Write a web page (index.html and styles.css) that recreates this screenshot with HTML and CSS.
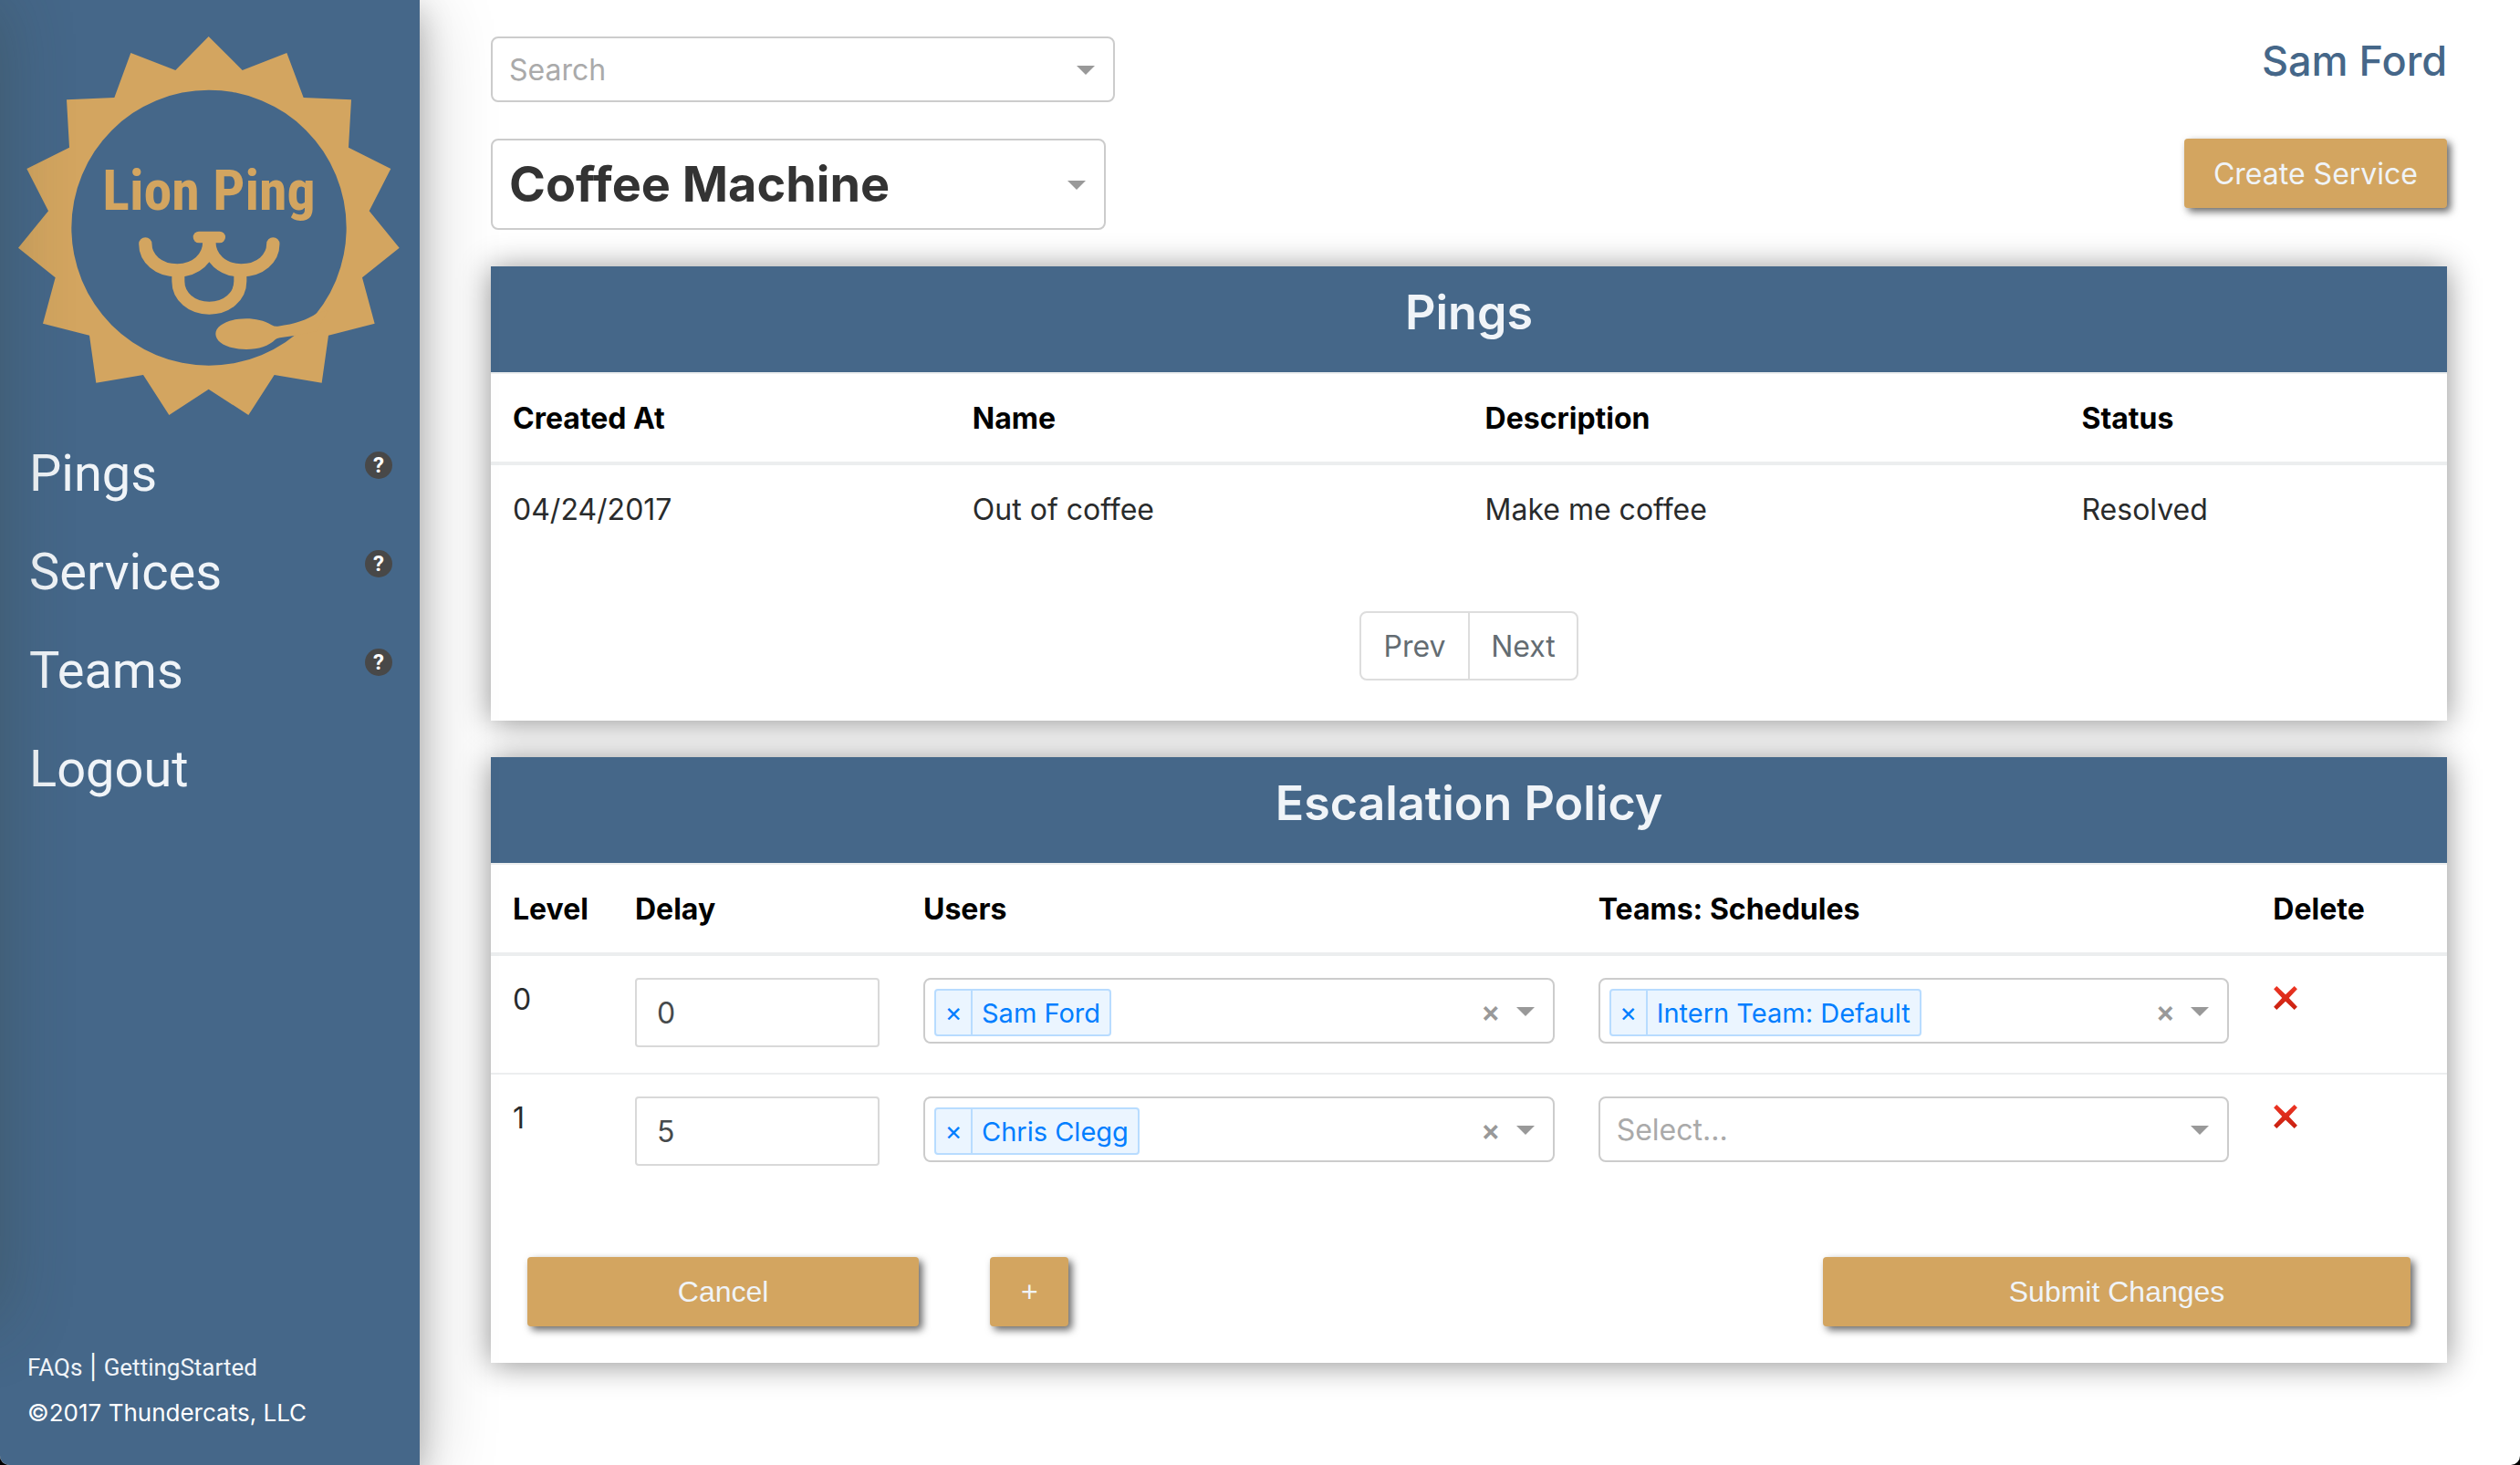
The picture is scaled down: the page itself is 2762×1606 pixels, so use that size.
FILE: index.html
```html
<!DOCTYPE html>
<html lang="en">
<head>
<meta charset="utf-8">
<meta name="viewport" content="width=device-width, initial-scale=1">
<title>Lion Ping</title>
<link rel="stylesheet" href="styles.css">
</head>
<body>
<div class="app">
  <aside class="sidebar">
    <a class="logo" href="#">
      <svg viewBox="20 40 418 416" role="img" aria-label="Lion Ping">
        <g transform="scale(.33333)" fill="#d3a560">
          <path fill-rule="evenodd" d="M686 120L797 231L943 174L998 321L1155 328L1146 485L1285 555L1214 694L1313 815L1191 913L1232 1064L1080 1103L1058 1259L902 1233L817 1365L686 1280L556 1365L471 1233L316 1259L294 1103L141 1064L182 913L60 815L159 694L88 555L228 485L219 328L376 321L430 174L577 231ZM687 296A452 453 0 1 0 687 1202A452 453 0 1 0 687 296Z"/>
          <path d="M1042 1030C1010 1052 970 1066 914 1073Q904 1075 893 1069C868 1054 840 1048 810 1048C752 1048 709 1070 709 1098C709 1127 752 1149 810 1149C850 1149 885 1138 905 1117Q910 1112 920 1111L967 1104L1040 1090L1080 1020Z"/>
          <rect x="635" y="761" width="106" height="38" rx="19"/>
          <g fill="none" stroke="#d3a560" stroke-width="43">
            <path stroke-linecap="round" d="M478 802C478 850 520 889 583 889C645 889 688 848 688 796C688 848 731 889 793 889C856 889 898 850 898 802"/>
            <path stroke-width="42" d="M586 900V925C586 975 630 1013 688 1013C746 1013 790 975 790 925V900"/>
          </g>
        </g>
        <text class="logo-text" x="229" y="230" text-anchor="middle">Lion Ping</text>
      </svg>
    </a>
    <nav class="nav">
      <div class="nav-item"><a href="#">Pings</a><button class="help" type="button" aria-label="About pings">?</button></div>
      <div class="nav-item"><a href="#">Services</a><button class="help" type="button" aria-label="About services">?</button></div>
      <div class="nav-item"><a href="#">Teams</a><button class="help" type="button" aria-label="About teams">?</button></div>
      <div class="nav-item"><a href="#">Logout</a></div>
    </nav>
    <footer class="footer">
      <p class="footer-links"><a href="#">FAQs</a> | <a href="#">GettingStarted</a></p>
      <p>©2017 Thundercats, LLC</p>
    </footer>
  </aside>

  <main class="main">
    <header class="topbar">
      <div class="select search">
        <select class="placeholder" aria-label="Search"><option>Search</option></select>
      </div>
      <a class="user" href="#">Sam Ford</a>
    </header>
    <div class="titlebar">
      <div class="select service">
        <select aria-label="Service"><option>Coffee Machine</option></select>
      </div>
      <button class="btn create" type="button">Create Service</button>
    </div>

    <section class="panel">
      <h3 class="panel-title">Pings</h3>
      <table class="table pings">
        <colgroup><col class="c-created"><col class="c-name"><col class="c-desc"><col></colgroup>
        <thead><tr><th>Created At</th><th>Name</th><th>Description</th><th>Status</th></tr></thead>
        <tbody><tr><td>04/24/2017</td><td>Out of coffee</td><td>Make me coffee</td><td>Resolved</td></tr></tbody>
      </table>
      <div class="pager">
        <button type="button">Prev</button><button type="button">Next</button>
      </div>
    </section>

    <section class="panel">
      <h3 class="panel-title">Escalation Policy</h3>
      <table class="table policy">
        <colgroup><col class="c-level"><col class="c-delay"><col class="c-users"><col class="c-teams"><col></colgroup>
        <thead><tr><th>Level</th><th>Delay</th><th>Users</th><th>Teams: Schedules</th><th>Delete</th></tr></thead>
        <tbody>
          <tr>
            <td>0</td>
            <td><input class="delay" type="text" value="0" aria-label="Delay for level 0"></td>
            <td>
              <div class="select multi">
                <span class="chip"><button type="button" aria-label="Remove Sam Ford">×</button><span>Sam Ford</span></span>
                <button class="clear" type="button" aria-label="Clear users">×</button>
              </div>
            </td>
            <td>
              <div class="select multi">
                <span class="chip"><button type="button" aria-label="Remove Intern Team: Default">×</button><span>Intern Team: Default</span></span>
                <button class="clear" type="button" aria-label="Clear teams">×</button>
              </div>
            </td>
            <td><button class="delete" type="button" aria-label="Delete level 0"><svg viewBox="0 0 26 26"><defs><linearGradient id="red" x1="0" y1="0" x2="0" y2="1"><stop offset="0" stop-color="#ee3524"/><stop offset="1" stop-color="#c8200f"/></linearGradient></defs><path fill="url(#red)" d="M4 1L13 9.500L22 1L25 4L16.500 13L25 22L22 25L13 16.500L4 25L1 22L9.500 13L1 4Z"/></svg></button></td>
          </tr>
          <tr>
            <td>1</td>
            <td><input class="delay" type="text" value="5" aria-label="Delay for level 1"></td>
            <td>
              <div class="select multi">
                <span class="chip"><button type="button" aria-label="Remove Chris Clegg">×</button><span>Chris Clegg</span></span>
                <button class="clear" type="button" aria-label="Clear users">×</button>
              </div>
            </td>
            <td>
              <div class="select">
                <select class="placeholder" aria-label="Teams and schedules"><option>Select...</option></select>
              </div>
            </td>
            <td><button class="delete" type="button" aria-label="Delete level 1"><svg viewBox="0 0 26 26"><path fill="url(#red)" d="M4 1L13 9.500L22 1L25 4L16.500 13L25 22L22 25L13 16.500L4 25L1 22L9.500 13L1 4Z"/></svg></button></td>
          </tr>
        </tbody>
      </table>
      <div class="actions">
        <button class="btn cancel" type="button">Cancel</button>
        <button class="btn add" type="button" aria-label="Add level">+</button>
        <button class="btn submit" type="submit">Submit Changes</button>
      </div>
    </section>
  </main>
</div>
</body>
</html>
```
FILE: styles.css
```css
* { box-sizing: border-box; }

html { background: #000; }

body {
  margin: 0;
  font-family: Inter, "Liberation Sans", sans-serif;
  font-size: 32px;
  line-height: 48px;
  color: #292b2c;
}

a { color: inherit; text-decoration: none; }
p { margin: 0; }
button, input, select { font: inherit; color: inherit; }
button { cursor: pointer; }

.app {
  display: grid;
  grid-template-columns: 460px 1fr;
  min-height: 100vh;
  background: #fff;
  border-radius: 0 0 10px 10px;
  overflow: hidden;
}

/* Sidebar */
.sidebar {
  position: relative;
  display: flex;
  flex-direction: column;
  padding: 40px 30px 32px 20px;
  overflow: hidden;
  background: #456789;
  color: #f0f4f8;
  box-shadow: 0 12px 32px rgba(0, 0, 0, .25), 0 12px 80px rgba(0, 0, 0, .22);
}

.sidebar::after {
  content: "";
  position: absolute;
  top: 0;
  bottom: 160px;
  right: 100%;
  width: 100px;
  box-shadow: 0 0 80px rgba(50, 60, 40, .3);
  pointer-events: none;
}

.logo svg { display: block; width: 418px; height: 416px; }
.logo-text { font: bold 62px "Liberation Sans Narrow", "Roboto Condensed", "DejaVu Sans Condensed", sans-serif; fill: #d3a560; }

.nav { padding: 35px 0 0 12px; font: 56px/56px Roboto, sans-serif; }
.nav-item { display: flex; justify-content: space-between; height: 108px; }
.help {
  width: 30px;
  height: 30px;
  margin-top: 4px;
  padding: 0;
  border: 0;
  border-radius: 50%;
  background: #484848;
  color: #fff;
  font: bold 24px/30px Roboto, sans-serif;
}

.footer { margin-top: auto; padding-left: 10px; font-size: 26px; line-height: 50px; color: #fff; }
.footer-links a { font-family: Roboto, sans-serif; color: #f0f4f8; }

/* Main column */
.main { padding: 40px 80px 112px 78px; }

.topbar, .titlebar { display: flex; justify-content: space-between; align-items: flex-start; margin-bottom: 40px; }
.user { font-size: 45px; line-height: 54px; font-weight: 500; color: #456789; }

.select {
  position: relative;
  height: 72px;
  border: 2px solid #ccc;
  border-radius: 8px;
  background: #fff;
}
.select::after {
  content: "";
  position: absolute;
  right: 20px;
  top: 30px;
  border: 10px solid transparent;
  border-top-color: #999;
  border-bottom: 0;
  pointer-events: none;
}
.select select {
  display: block;
  width: 100%;
  height: 100%;
  padding: 0 60px 0 18px;
  border: 0;
  background: none;
  appearance: none;
  outline: none;
}
.select .placeholder { padding-top: 2px; color: #aaa; }

.search { width: 684px; }
.service { width: 674px; height: 100px; font-size: 54px; font-weight: 700; color: #333; }
.service::after { top: 44px; }

.btn {
  height: 76px;
  padding: 0 32px;
  border: 0;
  border-radius: 4px;
  background: #d3a560;
  color: #f0f4f8;
  box-shadow: 4px 4px 8px rgba(0, 0, 0, .6);
}
.create { padding-top: 2px; }

.panel { background: #fff; box-shadow: 0 2px 32px rgba(0, 0, 0, .44); }
.panel + .panel { margin-top: 40px; }
.panel-title {
  margin: 0;
  padding: 20px 0 34px;
  background: #456789;
  color: #f0f4f8;
  font-size: 52px;
  line-height: 62px;
  font-weight: 600;
  text-align: center;
}

.table { width: 100%; table-layout: fixed; border-collapse: separate; border-spacing: 0; }
.table th, .table td { padding: 25px 24px 23px; text-align: left; vertical-align: top; }
.table th { border-top: 2px solid #eceeef; border-bottom: 4px solid #eceeef; color: #000; font-weight: 700; }
.table tr + tr td { border-top: 2px solid #eceeef; }

.c-created { width: 23.5%; }
.c-name { width: 26.2%; }
.c-desc { width: 30.5%; }
.c-level { width: 134px; }
.c-delay { width: 316px; }
.c-users, .c-teams { width: 34.5%; }

.policy td { padding: 24px 24px 28px; }

.pager { display: flex; justify-content: center; padding: 64px 0 44px; }
.pager button {
  height: 76px;
  width: 121px;
  padding: 2px 0 0;
  border: 2px solid #ddd;
  border-radius: 8px 0 0 8px;
  background: #fff;
  color: #636c72;
}
.pager button + button { margin-left: -2px; border-radius: 0 8px 8px 0; }

.delay {
  display: block;
  width: 100%;
  height: 76px;
  padding: 0 22px;
  border: 2px solid #d9d9d9;
  border-radius: 4px;
  color: #464a4c;
}

.multi { display: flex; align-items: flex-start; justify-content: space-between; padding: 10px 56px 0 10px; }
.chip {
  display: flex;
  height: 52px;
  border: 2px solid #b8dcff;
  border-radius: 4px;
  background: #ebf5ff;
  color: #007eff;
  font-size: 29px;
  line-height: 50px;
}
.chip button { width: 40px; padding: 0; border: 0; border-right: 2px solid #b8dcff; background: none; line-height: 48px; }
.chip span { padding: 0 10px; }
.clear { width: 24px; padding: 0; border: 0; background: none; color: #999; font-size: 32px; font-weight: 600; line-height: 50px; }

.delete { display: block; width: 28px; height: 28px; margin: 8px 0 0; padding: 0; border: 0; background: none; }
.delete svg { display: block; width: 28px; height: 28px; }

.actions { display: flex; padding: 72px 40px 40px; font-family: "Liberation Sans", sans-serif; }
.cancel { width: 20.8%; }
.add { width: 86px; margin-left: 78px; }
.submit { width: 31.2%; margin-left: auto; }
```
